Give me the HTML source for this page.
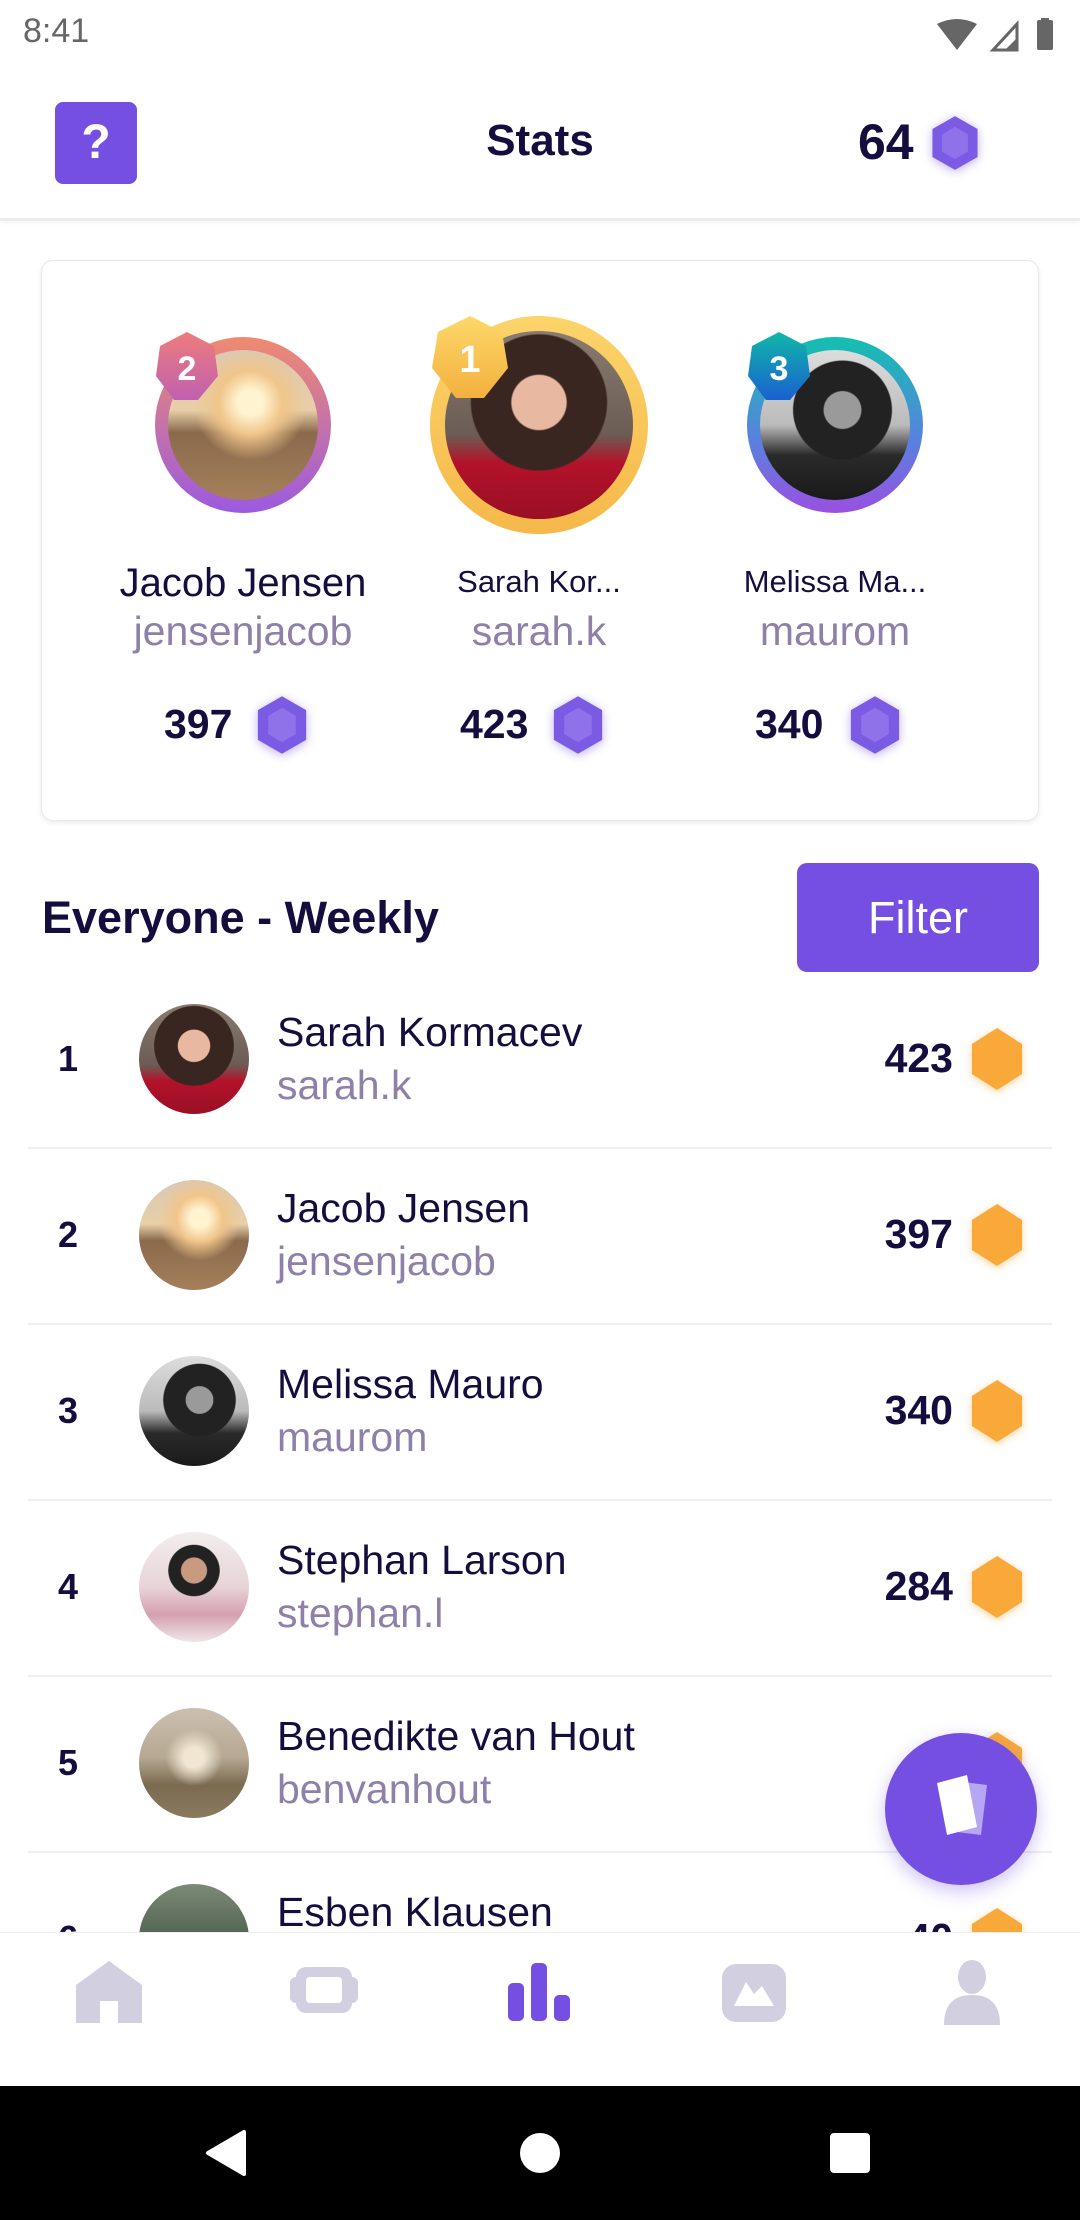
<!DOCTYPE html>
<html><head><meta charset="utf-8"><style>
*{margin:0;padding:0;box-sizing:border-box}
body{width:1080px;height:2220px;position:relative;overflow:hidden;background:#fff;font-family:"Liberation Sans",sans-serif;color:#150d3d}
.a{position:absolute}
.ph1{background:radial-gradient(circle at 50% 38%,#e8b9a0 0 18%,#3a2620 19% 45%,transparent 46%),linear-gradient(#8a7b70 0,#6b5d55 55%,#b3122a 70%,#9a0f24 100%)}
.ph2{background:radial-gradient(circle at 55% 35%,#fff3d0 0 10%,#f0c58a 25%,transparent 45%),linear-gradient(#d9c8b8 0,#e8cfa8 40%,#8a6a4c 55%,#a57f5a 100%)}
.ph3{background:radial-gradient(circle at 55% 40%,#9a9a9a 0 15%,#222 16% 40%,transparent 41%),linear-gradient(#ddd 0,#bbb 50%,#2a2a2a 70%,#1a1a1a 100%)}
.ph4{background:radial-gradient(circle at 50% 35%,#c89a80 0 14%,#222 15% 28%,transparent 29%),linear-gradient(#f2eeee 0,#e8d4d8 50%,#d4a0b0 75%,#efe6e8 100%)}
.ph5{background:radial-gradient(circle at 50% 45%,#f0e6d2 0 12%,transparent 35%),linear-gradient(#cbbfb0 0,#b6a892 45%,#7a6a50 70%,#8a7a5e 100%)}
.ph6{background:linear-gradient(#7d8a78 0,#5a6a58 40%,#3d4a3e 100%)}
.circ{border-radius:50%}
.name{font-size:41px;white-space:nowrap}
.user{font-size:41px;color:#8e80a8;white-space:nowrap}
.sep{position:absolute;left:28px;width:1024px;height:2px;background:#f0eef3}
.rank{position:absolute;left:56px;width:24px;text-align:center;font-size:36px;font-weight:bold}
.sc{position:absolute;right:127px;font-size:41px;font-weight:bold;text-align:right}
.oh{position:absolute;left:970px;filter:drop-shadow(0 2px 4px rgba(248,169,58,.5))}
.gm{filter:drop-shadow(0 2px 5px rgba(116,79,225,.45))}
</style></head><body>
<div class="a" style="left:23px;top:12px;font-size:34px;color:#666">8:41</div>
<svg class="a" style="left:935px;top:18px" width="130" height="34" viewBox="0 0 130 34">
<path d="M2 6 Q22 -4 42 6 L22 32Z" fill="#666"/>
<path d="M58 32 L82 6 L82 32Z" fill="none" stroke="#666" stroke-width="3"/>
<path d="M70 32 L82 20 L82 32Z" fill="#666"/>
<rect x="102" y="2" width="16" height="30" rx="2" fill="#666"/><rect x="106" y="0" width="8" height="4" fill="#666"/>
</svg>
<div class="a" style="left:55px;top:102px;width:82px;height:82px;border-radius:8px;background:#744fe1;color:#fff;font-size:48px;font-weight:bold;text-align:center;line-height:82px">?</div>
<div class="a" style="left:0;width:1080px;top:116px;text-align:center;font-size:44px;font-weight:bold">Stats</div>
<div class="a" style="left:858px;top:113px;font-size:50px;font-weight:bold">64</div>
<svg class="a gm" style="left:928px;top:114px" width="54" height="58" viewBox="0 0 48 54"><path d="M24 2 L45 14 L45 40 L24 52 L3 40 L3 14Z" fill="#7c5be4"/><path d="M24 12 L36 19 L36 35 L24 42 L12 35 L12 19Z" fill="#8f72ea"/></svg>
<div class="a" style="left:0;top:218px;width:1080px;height:3px;background:#ececf0;box-shadow:0 2px 4px rgba(0,0,0,.06)"></div>
<div class="a" style="left:41px;top:260px;width:998px;height:561px;border-radius:12px;border:1px solid #e8e6ee;box-shadow:0 2px 6px rgba(0,0,0,.08)"></div>
<div class="a circ" style="left:155px;top:337px;width:176px;height:176px;background:linear-gradient(#f08a70,#9b5ae0)"></div>
<div class="a circ ph2" style="left:168px;top:350px;width:150px;height:150px"></div>
<svg class="a" style="left:152px;top:330px" width="70" height="74" viewBox="0 0 70 74"><defs><linearGradient id="g2" x1="0" y1="0" x2="0" y2="1"><stop offset="0" stop-color="#ee7c7c"/><stop offset="1" stop-color="#c060b0"/></linearGradient></defs><path d="M35 2 L62 16 L66 46 L46 70 L22 70 L4 46 L8 16Z" fill="url(#g2)"/><text x="35" y="50" text-anchor="middle" font-size="34" font-weight="bold" fill="#fff" font-family="Liberation Sans">2</text></svg>
<div class="a circ" style="left:430px;top:316px;width:218px;height:218px;background:linear-gradient(#fbd46a,#f6b84a)"></div>
<div class="a circ ph1" style="left:445px;top:331px;width:188px;height:188px"></div>
<svg class="a" style="left:428px;top:314px" width="84" height="88" viewBox="0 0 84 88"><defs><linearGradient id="g1" x1="0" y1="0" x2="0" y2="1"><stop offset="0" stop-color="#fdd86a"/><stop offset="1" stop-color="#f4b03e"/></linearGradient></defs><path d="M42 2 L74 18 L80 54 L56 84 L28 84 L4 54 L10 18Z" fill="url(#g1)"/><text x="42" y="58" text-anchor="middle" font-size="38" font-weight="bold" fill="#fff" font-family="Liberation Sans">1</text></svg>
<div class="a circ" style="left:747px;top:337px;width:176px;height:176px;background:linear-gradient(#12c0b0,#5a80e0 60%,#9a50e0)"></div>
<div class="a circ ph3" style="left:760px;top:350px;width:150px;height:150px"></div>
<svg class="a" style="left:744px;top:330px" width="70" height="74" viewBox="0 0 70 74"><defs><linearGradient id="g3" x1="0" y1="0" x2="0" y2="1"><stop offset="0" stop-color="#10b8a8"/><stop offset="1" stop-color="#1a60d0"/></linearGradient></defs><path d="M35 2 L62 16 L66 46 L46 70 L22 70 L4 46 L8 16Z" fill="url(#g3)"/><text x="35" y="50" text-anchor="middle" font-size="34" font-weight="bold" fill="#fff" font-family="Liberation Sans">3</text></svg>
<div class="a" style="left:93px;width:300px;text-align:center;top:561px;font-size:40px">Jacob Jensen</div>
<div class="a user" style="left:93px;width:300px;text-align:center;top:608px">jensenjacob</div>
<div class="a" style="left:389px;width:300px;text-align:center;top:564px;font-size:31px">Sarah Kor...</div>
<div class="a user" style="left:389px;width:300px;text-align:center;top:608px">sarah.k</div>
<div class="a" style="left:685px;width:300px;text-align:center;top:564px;font-size:31px">Melissa Ma...</div>
<div class="a user" style="left:685px;width:300px;text-align:center;top:608px">maurom</div>
<div class="a" style="left:164px;top:701px;font-size:41px;font-weight:bold">397</div>
<div class="a" style="left:460px;top:701px;font-size:41px;font-weight:bold">423</div>
<div class="a" style="left:755px;top:701px;font-size:41px;font-weight:bold">340</div>
<svg class="a gm" style="left:254px;top:694px" width="56" height="62" viewBox="0 0 48 54"><path d="M24 2 L45 14 L45 40 L24 52 L3 40 L3 14Z" fill="#7c5be4"/><path d="M24 12 L36 19 L36 35 L24 42 L12 35 L12 19Z" fill="#8f72ea"/></svg>
<svg class="a gm" style="left:550px;top:694px" width="56" height="62" viewBox="0 0 48 54"><path d="M24 2 L45 14 L45 40 L24 52 L3 40 L3 14Z" fill="#7c5be4"/><path d="M24 12 L36 19 L36 35 L24 42 L12 35 L12 19Z" fill="#8f72ea"/></svg>
<svg class="a gm" style="left:847px;top:694px" width="56" height="62" viewBox="0 0 48 54"><path d="M24 2 L45 14 L45 40 L24 52 L3 40 L3 14Z" fill="#7c5be4"/><path d="M24 12 L36 19 L36 35 L24 42 L12 35 L12 19Z" fill="#8f72ea"/></svg>
<div class="a" style="left:42px;top:892px;font-size:45px;font-weight:bold">Everyone - Weekly</div>
<div class="a" style="left:797px;top:863px;width:242px;height:109px;border-radius:10px;background:#744fe1;color:#fff;font-size:45px;text-align:center;line-height:109px">Filter</div>

<div class="rank" style="top:1038px">1</div>
<div class="a circ ph1" style="left:139px;top:1004px;width:110px;height:110px"></div>
<div class="a name" style="left:277px;top:1009px">Sarah Kormacev</div>
<div class="a user" style="left:277px;top:1062px">sarah.k</div>
<div class="sc" style="top:1035px">423</div>
<div class="sep" style="top:1147px"></div>

<div class="rank" style="top:1214px">2</div>
<div class="a circ ph2" style="left:139px;top:1180px;width:110px;height:110px"></div>
<div class="a name" style="left:277px;top:1185px">Jacob Jensen</div>
<div class="a user" style="left:277px;top:1238px">jensenjacob</div>
<div class="sc" style="top:1211px">397</div>
<div class="sep" style="top:1323px"></div>

<div class="rank" style="top:1390px">3</div>
<div class="a circ ph3" style="left:139px;top:1356px;width:110px;height:110px"></div>
<div class="a name" style="left:277px;top:1361px">Melissa Mauro</div>
<div class="a user" style="left:277px;top:1414px">maurom</div>
<div class="sc" style="top:1387px">340</div>
<div class="sep" style="top:1499px"></div>

<div class="rank" style="top:1566px">4</div>
<div class="a circ ph4" style="left:139px;top:1532px;width:110px;height:110px"></div>
<div class="a name" style="left:277px;top:1537px">Stephan Larson</div>
<div class="a user" style="left:277px;top:1590px">stephan.l</div>
<div class="sc" style="top:1563px">284</div>
<div class="sep" style="top:1675px"></div>

<div class="rank" style="top:1742px">5</div>
<div class="a circ ph5" style="left:139px;top:1708px;width:110px;height:110px"></div>
<div class="a name" style="left:277px;top:1713px">Benedikte van Hout</div>
<div class="a user" style="left:277px;top:1766px">benvanhout</div>
<div class="sep" style="top:1851px"></div>

<div class="rank" style="top:1918px">6</div>
<div class="a circ ph6" style="left:139px;top:1884px;width:110px;height:110px"></div>
<div class="a name" style="left:277px;top:1889px">Esben Klausen</div>
<div class="sc" style="top:1915px">40</div>

<svg class="oh" style="top:1026px" width="54" height="66" viewBox="0 0 54 66"><path d="M27 2 L52 18 L52 48 L27 64 L2 48 L2 18Z" fill="#f8a93a"/></svg>
<svg class="oh" style="top:1202px" width="54" height="66" viewBox="0 0 54 66"><path d="M27 2 L52 18 L52 48 L27 64 L2 48 L2 18Z" fill="#f8a93a"/></svg>
<svg class="oh" style="top:1378px" width="54" height="66" viewBox="0 0 54 66"><path d="M27 2 L52 18 L52 48 L27 64 L2 48 L2 18Z" fill="#f8a93a"/></svg>
<svg class="oh" style="top:1554px" width="54" height="66" viewBox="0 0 54 66"><path d="M27 2 L52 18 L52 48 L27 64 L2 48 L2 18Z" fill="#f8a93a"/></svg>
<svg class="oh" style="top:1730px" width="54" height="66" viewBox="0 0 54 66"><path d="M27 2 L52 18 L52 48 L27 64 L2 48 L2 18Z" fill="#f8a93a"/></svg>
<svg class="oh" style="top:1906px" width="54" height="66" viewBox="0 0 54 66"><path d="M27 2 L52 18 L52 48 L27 64 L2 48 L2 18Z" fill="#f8a93a"/></svg>

<div class="a circ" style="left:885px;top:1733px;width:152px;height:152px;background:#744fe1;box-shadow:0 6px 18px rgba(116,79,225,.35)"></div>
<svg class="a" style="left:915px;top:1763px" width="92" height="92" viewBox="0 0 92 92"><path d="M40 18 L72 22 L66 72 L34 68Z" fill="#b7a6f2"/><path d="M22 20 L52 12 L62 64 L32 72Z" fill="#fff"/></svg>

<div class="a" style="left:0;top:1932px;width:1080px;height:154px;background:#fff;border-top:1px solid #f0eef3"></div>
<svg class="a" style="left:74px;top:1959px" width="70" height="64" viewBox="0 0 70 64"><path d="M35 2 L68 26 L68 64 L44 64 L44 42 L26 42 L26 64 L2 64 L2 26Z" fill="#d2cfe0"/></svg>
<svg class="a" style="left:290px;top:1965px" width="68" height="50" viewBox="0 0 68 50"><rect x="6" y="2" width="56" height="46" rx="10" fill="#d2cfe0"/><rect x="0" y="12" width="68" height="26" rx="6" fill="#d2cfe0"/><rect x="16" y="12" width="36" height="26" rx="4" fill="#fff"/></svg>
<svg class="a" style="left:506px;top:1963px" width="66" height="58" viewBox="0 0 66 58"><rect x="2" y="20" width="16" height="38" rx="5" fill="#744fe1"/><rect x="25" y="0" width="16" height="58" rx="5" fill="#744fe1"/><rect x="48" y="32" width="16" height="26" rx="5" fill="#744fe1"/></svg>
<svg class="a" style="left:720px;top:1962px" width="68" height="62" viewBox="0 0 68 62"><rect x="2" y="2" width="64" height="58" rx="14" fill="#d2cfe0"/><path d="M14 44 L26 20 L34 32 L42 24 L54 44Z" fill="#fff"/></svg>
<svg class="a" style="left:942px;top:1959px" width="60" height="66" viewBox="0 0 60 66"><ellipse cx="30" cy="18" rx="14" ry="17" fill="#d2cfe0"/><path d="M2 66 Q2 36 30 36 Q58 36 58 66Z" fill="#d2cfe0"/></svg>

<div class="a" style="left:0;top:2086px;width:1080px;height:134px;background:#000"></div>
<svg class="a" style="left:200px;top:2128px" width="50" height="50" viewBox="0 0 50 50"><path d="M44 4 L44 46 L8 25Z" fill="#fff" stroke="#fff" stroke-linejoin="round" stroke-width="4"/></svg>
<div class="a circ" style="left:520px;top:2133px;width:40px;height:40px;background:#fff"></div>
<div class="a" style="left:830px;top:2133px;width:40px;height:40px;border-radius:4px;background:#fff"></div>
</body></html>
